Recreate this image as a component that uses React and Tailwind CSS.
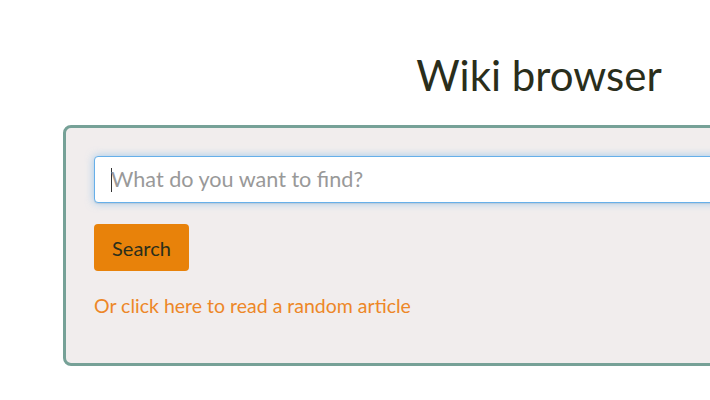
export default function App() {
  return (
    <div className="w-[710px] h-[400px] overflow-hidden bg-white" style={{ fontFamily: "Lato, 'Open Sans', sans-serif" }}>
      <div className="pl-[63px] pt-[47px]">
        <div className="w-[952px]">
          <h1 className="text-center text-[42px] leading-[56px] text-[#2a2e1b] font-normal">Wiki browser</h1>
          <div className="mt-[22px] border-[3px] border-[#76a197] rounded-[8px] bg-[#f1eded] px-[28px] pt-[28px] pb-[44px]">
            <div className="h-[47px] rounded-[4px] border border-[#66afe9] bg-white shadow-[0_1px_1px_rgba(0,0,0,0.075),0_0_8px_rgba(102,175,233,0.6)] flex items-center pl-[16px]">
              <span className="w-px h-[24px] bg-[#333]"></span>
              <span className="text-[21.6px] text-[#999] -ml-[1px]">What do you want to find?</span>
            </div>
            <button className="mt-[21px] h-[47px] w-[95px] rounded-[4px] bg-[#e8820a] text-[20px] text-[#2a2e1b] flex items-center justify-center">Search</button>
            <div className="mt-[22px] text-[19.5px] leading-[26px] text-[#ed8727]">Or click here to read a random article</div>
          </div>
        </div>
      </div>
    </div>
  );
}
